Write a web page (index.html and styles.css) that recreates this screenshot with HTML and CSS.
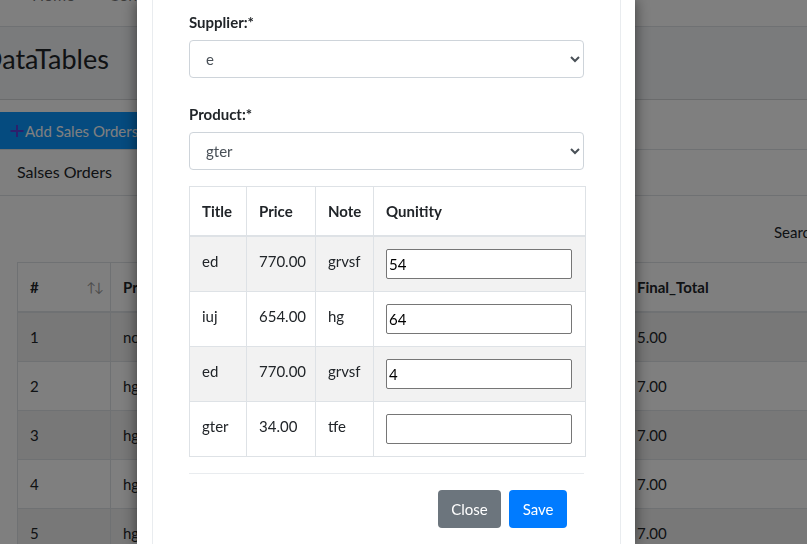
FILE: index.html
```html
<!DOCTYPE html>
<html lang="en">
<head>
<meta charset="utf-8">
<title>DataTables</title>
<link rel="stylesheet" href="styles.css">
</head>
<body>
<div class="page">
  <nav class="navbar">
    <a class="nav-link">Home</a>
    <a class="nav-link">Contact</a>
  </nav>
  <div class="content-header">
    <h1>DataTables</h1>
  </div>
  <div class="card">
    <div class="card-header">
      <button class="btn-add"><svg class="plus" width="14" height="14" viewBox="0 0 14 14"><path d="M7 1v12M0.5 7h13" stroke="currentColor" stroke-width="2"/></svg>Add Sales Orders</button>
    </div>
    <div class="card-title-row">Salses Orders</div>
    <div class="card-body">
      <div class="dt-top"><label class="dt-search">Search:</label><input class="dt-input" type="text"></div>
      <table class="dt">
        <colgroup>
          <col class="c-num"><col class="c-mid"><col class="c-mid"><col class="c-mid"><col class="c-mid"><col class="c-wide"><col class="c-wide">
        </colgroup>
        <thead>
          <tr><th><span class="th-sort"># <span class="sort">↑↓</span></span></th><th>Product</th><th>Supplier</th><th>Quantity</th><th>Total</th><th>Final_Total</th><th>Action</th></tr>
        </thead>
        <tbody>
          <tr><td>1</td><td>no</td><td>e</td><td>5</td><td>5.00</td><td>5.00</td><td></td></tr>
          <tr><td>2</td><td>hg</td><td>e</td><td>7</td><td>7.00</td><td>7.00</td><td></td></tr>
          <tr><td>3</td><td>hg</td><td>e</td><td>7</td><td>7.00</td><td>7.00</td><td></td></tr>
          <tr><td>4</td><td>hg</td><td>e</td><td>7</td><td>7.00</td><td>7.00</td><td></td></tr>
          <tr><td>5</td><td>hg</td><td>e</td><td>7</td><td>7.00</td><td>7.00</td><td></td></tr>
        </tbody>
      </table>
    </div>
  </div>
</div>

<div class="backdrop"></div>

<div class="modal">
  <div class="modal-inner">
    <div class="form-group">
      <label class="form-label">Supplier:*</label>
      <select class="form-control"><option>e</option></select>
    </div>
    <div class="form-group">
      <label class="form-label">Product:*</label>
      <select class="form-control"><option>gter</option></select>
    </div>
    <table class="items">
      <colgroup><col class="w-title"><col class="w-price"><col class="w-note"><col></colgroup>
      <thead>
        <tr><th>Title</th><th>Price</th><th>Note</th><th>Qunitity</th></tr>
      </thead>
      <tbody>
        <tr><td>ed</td><td>770.00</td><td>grvsf</td><td><input class="qty" type="text" value="54"></td></tr>
        <tr><td>iuj</td><td>654.00</td><td>hg</td><td><input class="qty" type="text" value="64"></td></tr>
        <tr><td>ed</td><td>770.00</td><td>grvsf</td><td><input class="qty" type="text" value="4"></td></tr>
        <tr><td>gter</td><td>34.00</td><td>tfe</td><td><input class="qty" type="text" value=""></td></tr>
      </tbody>
    </table>
    <hr class="divider">
    <div class="modal-footer">
      <button class="btn btn-secondary">Close</button>
      <button class="btn btn-primary">Save</button>
    </div>
  </div>
</div>
</body>
</html>
```

FILE: styles.css
```css
* { box-sizing: border-box; }
html, body { margin: 0; padding: 0; }
body {
  width: 807px;
  height: 544px;
  overflow: hidden;
  font-family: Lato, "Noto Sans", sans-serif;
  font-size: 15px;
  line-height: 24px;
  color: #212529;
  background: #f4f6f9;
}
.page { width: 1000px; }

.navbar {
  height: 27px;
  background: #fff;
  border-bottom: 1px solid #dee2e6;
  display: flex;
  gap: 34px;
  padding-left: 32px;
  overflow: hidden;
}
.nav-link {
  color: rgba(0,0,0,.55);
  margin-top: -17px;
  font-size: 16px;
}

.content-header {
  height: 72px;
  padding-top: 12px;
}
.content-header h1 {
  margin: 0 0 0 -18px;
  font-size: 27px;
  font-weight: 400;
  line-height: 40px;
}

.card {
  background: #fff;
  border-top: 1px solid #d4d6d9;
}
.card-header {
  padding-top: 12px;
  border-bottom: 1px solid #dee2e6;
  display: flex;
}
.btn-add {
  height: 37px;
  width: 150px;
  border: 0;
  margin: 0;
  background: #0a96ff;
  color: #fff;
  font: inherit;
  font-size: 15px;
  display: flex;
  align-items: center;
  padding: 0 0 0 10px;
  white-space: nowrap;
}
.plus { color: #5a40d8; flex: none; margin-right: 1px; }

.card-title-row {
  height: 46px;
  padding: 10px 17px 0;
  border-bottom: 1px solid #dee2e6;
  font-size: 16px;
}
.card-body { padding: 17px 0 0 17px; }
.dt-top {
  height: 38px;
  display: flex;
  align-items: center;
  padding-left: 757px;
  gap: 6px;
}
.dt-search { font-size: 15px; }
.dt-input {
  width: 150px;
  height: 31px;
  border: 1px solid #aaa;
  border-radius: 3px;
}

.dt {
  margin-top: 11px;
  border-collapse: collapse;
  table-layout: fixed;
  width: 1007px;
  border: 1px solid #dee2e6;
}
.c-num { width: 93px; }
.c-mid { width: 128.5px; }
.c-wide { width: 200px; }
.dt th, .dt td {
  padding: 12px;
  text-align: left;
  border: 1px solid #dee2e6;
  line-height: 24px;
  white-space: nowrap;
  color: #212529;
}
.dt th { font-weight: 700; }
.dt thead th { border-bottom: 2px solid #dee2e6; }
.dt tbody tr:nth-child(odd) { background: #f1f1f1; }
.th-sort { display: flex; justify-content: space-between; align-items: center; }
.sort { color: #999; font-weight: 400; font-size: 13px; letter-spacing: -2px; margin-right: -4px; }

.backdrop {
  position: fixed;
  inset: 0;
  background: rgba(0,0,0,.5);
}

.modal {
  position: fixed;
  left: 137px;
  top: 0;
  width: 498px;
  height: 544px;
  background: #fff;
  padding: 0 14px 0 15px;
  box-shadow: 0 0 14px rgba(0,0,0,.55);
}
.modal-inner {
  height: 100%;
  border-left: 1px solid #e9ecef;
  border-right: 1px solid #e9ecef;
  padding: 10px 36px 0 36px;
}
.form-group { margin-bottom: 24px; }
.form-group:nth-child(2) { margin-bottom: 16px; }
.form-label {
  display: block;
  font-weight: 700;
  font-size: 15px;
  line-height: 24px;
  margin-bottom: 6px;
}
.form-control {
  display: block;
  width: 100%;
  height: 38px;
  padding: 6px 12px;
  font: inherit;
  font-size: 15px;
  color: #495057;
  background: #fff;
  border: 1px solid #ced4da;
  border-radius: 4px;
}

.items {
  width: calc(100% + 2px);
  border-collapse: collapse;
  border: 1px solid #dee2e6;
  table-layout: fixed;
}
.items th, .items td {
  padding: 12px;
  border: 1px solid #dee2e6;
  text-align: left;
  vertical-align: top;
  line-height: 24px;
}
.items th { font-weight: 700; }
.items thead th { border-bottom: 2px solid #dee2e6; }
.items tbody tr:nth-child(odd) { background: #f2f2f2; }
.w-title { width: 57px; }
.w-price { width: 69px; }
.w-note { width: 58px; }
.qty {
  display: block;
  width: 186px;
  height: 30px;
  font: inherit;
  font-size: 15px;
  line-height: 24px;
  padding: 1px 2px;
  border: 1px solid #767676;
  border-radius: 2px;
  color: #000;
  background: #fff;
}

.divider {
  margin: 16px 0 0;
  border: 0;
  border-top: 1px solid #e9ecef;
}
.modal-footer {
  display: flex;
  justify-content: flex-end;
  gap: 8px;
  padding: 16px 17px 0 0;
}
.btn {
  height: 38px;
  padding: 0 13.5px;
  border: 0;
  border-radius: 4px;
  font: inherit;
  font-size: 15px;
  color: #fff;
}
.btn-secondary { background: #6c757d; }
.btn-primary { background: #007bff; }
```
